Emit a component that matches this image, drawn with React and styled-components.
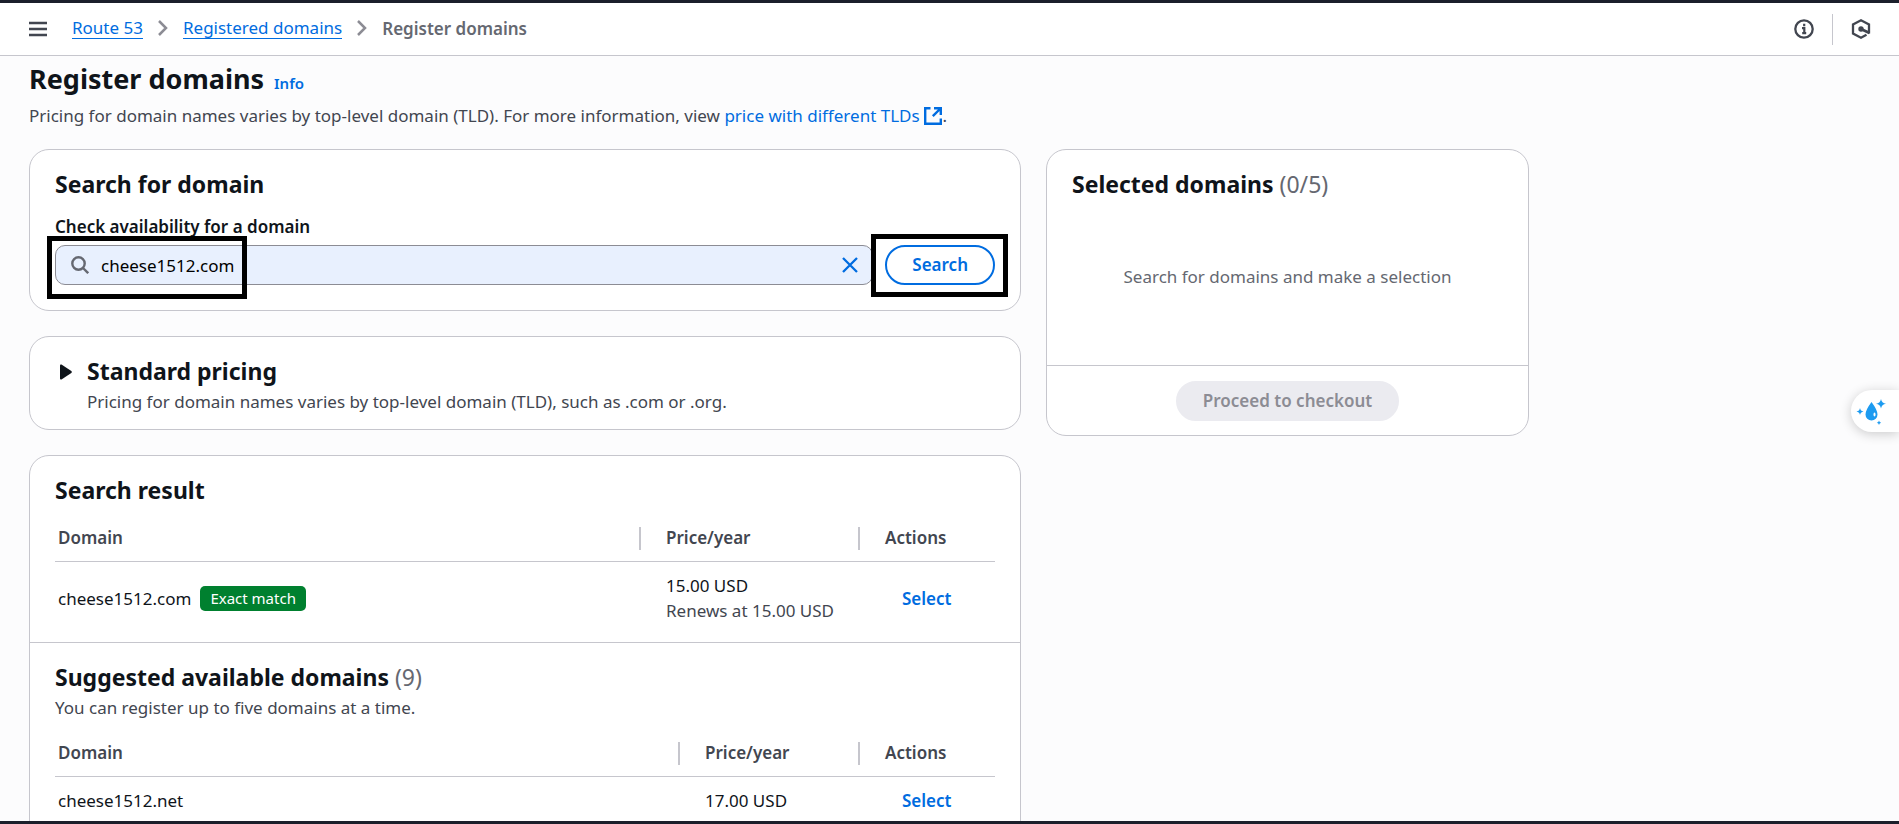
import React, { useState } from "react";
import styled, { createGlobalStyle } from "styled-components";

const GlobalStyle = createGlobalStyle`
  *, *::before, *::after { box-sizing: border-box; }
  body {
    margin: 0;
    background: #fcfcfd;
    color: #0f141a;
    font-family: "Noto Sans", "Open Sans", sans-serif;
    font-size: 17px;
    line-height: 25px;
  }
  button, input { font: inherit; }
  h1, h2, p { margin: 0; }
`;

const Frame = styled.div`
  display: flex;
  flex-direction: column;
  height: 100vh;
  border-top: 3px solid #1b1f2b;
  border-bottom: 3px solid #1b1f2b;
`;

const TopBar = styled.header`
  display: flex;
  align-items: center;
  flex: none;
  height: 53px;
  padding: 0 28px 0 29px;
  background: #fff;
  border-bottom: 1px solid #c6c6cd;
`;

const IconButton = styled.button`
  display: flex;
  padding: 0;
  border: 0;
  background: none;
  color: ${(p) => p.$color || "#424650"};
  cursor: pointer;
`;

const Crumbs = styled.ol`
  display: flex;
  align-items: center;
  gap: 15px;
  margin: 0 0 0 25px;
  padding: 0 0 2px;
  list-style: none;
`;

const Crumb = styled.li`
  display: flex;
  align-items: center;
  gap: 15px;
  font-weight: ${(p) => (p.$current ? 600 : 400)};
  color: #656871;
`;

const CrumbLink = styled.a`
  line-height: 21px;
  color: #006ce0;
  text-decoration: none;
  border-bottom: 1px solid #006ce0;
`;

const Tools = styled.div`
  display: flex;
  align-items: center;
  gap: 18px;
  margin-left: auto;
`;

const ToolDivider = styled.span`
  width: 1px;
  height: 31px;
  background: #c6c6cd;
`;

const Main = styled.main`
  flex: 1;
  min-height: 0;
  overflow-y: auto;
  scrollbar-width: none;
  padding: 5px 29px 0;
`;

const Content = styled.div`
  max-width: 1500px;
`;

const TitleRow = styled.div`
  display: flex;
  align-items: baseline;
  gap: 10px;
`;

const PageTitle = styled.h1`
  font-size: 27px;
  line-height: 36px;
  font-weight: 700;
`;

const TextLink = styled.a`
  color: #006ce0;
  text-decoration: none;
`;

const InfoLink = styled(TextLink)`
  font-size: 15px;
  font-weight: 600;
`;

const Description = styled.p`
  color: #424650;
  margin-top: ${(p) => p.$gap || 3}px;
`;

const InlineIcon = styled.svg`
  margin: 0 1px 0 4px;
  vertical-align: -3px;
`;

const Columns = styled.div`
  display: grid;
  grid-template-columns: minmax(0, 992fr) minmax(0, 483fr);
  gap: 25px;
  align-items: start;
  margin-top: 21px;
`;

const Stack = styled.div`
  display: flex;
  flex-direction: column;
  gap: 25px;
`;

const Card = styled.section`
  background: #fff;
  border: 1px solid #c6c6cd;
  border-radius: 20px;
`;

const CardBody = styled.div`
  padding: 19px 25px ${(p) => p.$bottom}px;
  border-top: ${(p) => (p.$ruled ? "1px solid #c6c6cd" : "0")};
`;

const CardTitle = styled.h2`
  font-size: 23px;
  line-height: 30px;
  font-weight: 700;
`;

const Counter = styled.span`
  font-weight: 400;
  color: #656871;
`;

const FieldLabel = styled.label`
  display: block;
  margin: 15px 0 6px;
  font-weight: 600;
`;

const SearchRow = styled.form`
  display: flex;
  gap: 12px;
`;

const Field = styled.div`
  position: relative;
  display: flex;
  align-items: center;
  flex: 1;
  height: 40px;
  padding: 0 14px 0 15px;
  gap: 12px;
  background: #e8f0fe;
  border: 1px solid #8c8c94;
  border-radius: 10px;
`;

const FieldInput = styled.input`
  flex: 1;
  min-width: 0;
  padding: 0;
  border: 0;
  outline: 0;
  background: transparent;
  color: #000;
`;

const ButtonSlot = styled.div`
  position: relative;
`;

const Marker = styled.span`
  position: absolute;
  border: 5px solid #000;
  pointer-events: none;
`;

const FieldMarker = styled(Marker)`
  top: -10px;
  left: -9px;
  width: 200px;
  height: 63px;
`;

const ButtonMarker = styled(Marker)`
  inset: -11px -13px -12px -14px;
`;

const PillButton = styled.button`
  height: 40px;
  padding: 0 25px 2px;
  border: 2px solid ${(p) => (p.disabled ? "#ebebf0" : "#006ce0")};
  border-radius: 20px;
  background: ${(p) => (p.disabled ? "#ebebf0" : "#fff")};
  color: ${(p) => (p.disabled ? "#8c8c94" : "#006ce0")};
  font-weight: 600;
  line-height: 25px;
`;

const Expander = styled.button`
  display: flex;
  align-items: flex-start;
  gap: 15px;
  width: 100%;
  padding: 19px 30px 15px;
  border: 0;
  background: none;
  color: inherit;
  text-align: left;
`;

const Caret = styled.svg`
  flex: none;
  margin-top: 8px;
`;

const Table = styled.table`
  width: 100%;
  margin-top: 10px;
  table-layout: fixed;
  border-collapse: separate;
  border-spacing: 0;
`;

const Col = styled.col`
  width: ${(p) => (p.$width ? `${p.$width}px` : "auto")};
`;

const HeadCell = styled.th`
  position: relative;
  padding: 10px 0 11px 27px;
  border-bottom: 1px solid #c6c6cd;
  color: #424650;
  font-weight: 600;
  text-align: left;

  &:first-child { padding-left: 3px; }

  &:not(:first-child)::before {
    content: "";
    position: absolute;
    left: 0;
    top: 12px;
    bottom: 11px;
    width: 2px;
    background: #c6c6cd;
  }
`;

const Cell = styled.td`
  padding: 11px 0 11px 27px;
  vertical-align: middle;
  white-space: nowrap;

  &:first-child { padding-left: 3px; }
`;

const Renewal = styled.div`
  color: #424650;
`;

const DomainName = styled.div`
  display: flex;
  align-items: center;
  gap: 9px;
`;

const Badge = styled.span`
  padding: 0 10px;
  border-radius: 5px;
  background: #00802f;
  color: #fff;
  font-size: 15px;
  line-height: 25px;
`;

const SelectButton = styled.button`
  display: block;
  padding: 0 17px;
  border: 0;
  background: none;
  color: #006ce0;
  font-weight: 600;
`;

const EmptyState = styled.p`
  padding: 65px 0 57px;
  color: #656871;
  text-align: center;
`;

const CardFooter = styled.div`
  display: flex;
  justify-content: center;
  padding: 15px 25px 14px;
  border-top: 1px solid #c6c6cd;
`;

const Assistant = styled.button`
  position: fixed;
  right: 0;
  top: 390px;
  width: 48px;
  height: 42px;
  padding: 0;
  border: 0;
  border-radius: 21px 0 0 21px;
  background: #fff;
  box-shadow: 0 2px 12px rgba(0, 0, 0, 0.2);
`;

const Chevron = () => (
  <svg width="10" height="16" viewBox="0 0 10 16" fill="none" stroke="#8c8c94" strokeWidth="2.500" aria-hidden="true">
    <path d="M1 1l7 7-7 7" />
  </svg>
);

function DomainTable({ rows, priceWidth }) {
  return (
    <Table>
      <colgroup>
        <Col />
        <Col $width={priceWidth} />
        <Col $width={137} />
      </colgroup>
      <thead>
        <tr>
          <HeadCell scope="col">Domain</HeadCell>
          <HeadCell scope="col">Price/year</HeadCell>
          <HeadCell scope="col">Actions</HeadCell>
        </tr>
      </thead>
      <tbody>
        {rows.map((row) => (
          <tr key={row.name}>
            <Cell>
              <DomainName>
                {row.name}
                {row.badge && <Badge>{row.badge}</Badge>}
              </DomainName>
            </Cell>
            <Cell>
              {row.price}
              {row.renewal && <Renewal>{row.renewal}</Renewal>}
            </Cell>
            <Cell>
              <SelectButton type="button">Select</SelectButton>
            </Cell>
          </tr>
        ))}
      </tbody>
    </Table>
  );
}

const matches = [
  { name: "cheese1512.com", badge: "Exact match", price: "15.00 USD", renewal: "Renews at 15.00 USD" },
];
const suggestions = [{ name: "cheese1512.net", price: "17.00 USD" }];

export default function App() {
  const [query, setQuery] = useState("cheese1512.com");

  return (
    <Frame>
      <GlobalStyle />
      <TopBar>
        <IconButton type="button" aria-label="Open navigation">
          <svg width="18" height="16" viewBox="0 0 18 16" stroke="currentColor" strokeWidth="2.300">
            <path d="M0 2h18M0 8h18M0 14h18" />
          </svg>
        </IconButton>
        <nav aria-label="Breadcrumbs">
          <Crumbs>
            <Crumb>
              <CrumbLink href="#route53">Route 53</CrumbLink>
              <Chevron />
            </Crumb>
            <Crumb>
              <CrumbLink href="#registered">Registered domains</CrumbLink>
              <Chevron />
            </Crumb>
            <Crumb $current>Register domains</Crumb>
          </Crumbs>
        </nav>
        <Tools>
          <IconButton type="button" aria-label="Information">
            <svg width="20" height="20" viewBox="0 0 20 20" fill="none" stroke="currentColor" strokeWidth="2.300">
              <circle cx="10" cy="10" r="8.700" />
              <path d="M10.200 4.800v2.400M8 9.200h2.300v5.200M8.200 14.200h4" strokeWidth="2.200" />
            </svg>
          </IconButton>
          <ToolDivider />
          <IconButton type="button" aria-label="Amazon Q">
            <svg width="20" height="20" viewBox="0 0 20 20" fill="none" stroke="currentColor" strokeWidth="2.300">
              <path d="M18 14.500V5.500L10 1.300 2 5.500v9l8 4.200 5.500-3" />
              <circle cx="10" cy="10" r="2.700" fill="currentColor" stroke="none" />
              <path d="M10 10l8.500 4" strokeWidth="2.800" />
            </svg>
          </IconButton>
        </Tools>
      </TopBar>

      <Main>
        <Content>
          <TitleRow>
            <PageTitle>Register domains</PageTitle>
            <InfoLink href="#info">Info</InfoLink>
          </TitleRow>
          <Description $gap={6}>
            Pricing for domain names varies by top-level domain (TLD). For more information, view{" "}
            <TextLink href="#pricing">
              price with different TLDs
              <InlineIcon width="18" height="18" viewBox="0 0 18 18" fill="none" stroke="currentColor" strokeWidth="2.400" aria-hidden="true">
                <path d="M6.500 1.200H1.200v15.600h15.600V11.500" />
                <path d="M10 1.200h6.800V8M16.500 1.500L8.800 9.200" />
              </InlineIcon>
            </TextLink>
            .
          </Description>

          <Columns>
            <Stack>
              <Card>
                <CardBody $bottom={25}>
                  <CardTitle>Search for domain</CardTitle>
                  <FieldLabel htmlFor="domain">Check availability for a domain</FieldLabel>
                  <SearchRow onSubmit={(e) => e.preventDefault()}>
                    <Field>
                      <svg width="18" height="18" viewBox="0 0 18 18" fill="none" stroke="#656871" strokeWidth="2.400" aria-hidden="true">
                        <circle cx="7.500" cy="7.500" r="6.200" />
                        <path d="M12 12l5.200 5.200" />
                      </svg>
                      <FieldInput id="domain" type="text" value={query} onChange={(e) => setQuery(e.target.value)} />
                      <IconButton type="button" $color="#006ce0" aria-label="Clear" onClick={() => setQuery("")}>
                        <svg width="16" height="16" viewBox="0 0 16 16" stroke="currentColor" strokeWidth="2.300">
                          <path d="M1 1l14 14M15 1L1 15" />
                        </svg>
                      </IconButton>
                      <FieldMarker />
                    </Field>
                    <ButtonSlot>
                      <PillButton type="submit">Search</PillButton>
                      <ButtonMarker />
                    </ButtonSlot>
                  </SearchRow>
                </CardBody>
              </Card>

              <Card>
                <Expander type="button" aria-expanded="false">
                  <Caret width="12" height="16" viewBox="0 0 12 16" fill="#0f141a" aria-hidden="true">
                    <path d="M0 1.500Q0 0 1.500.6L11.300 7q1 1 0 2L1.500 15.400Q0 16 0 14.500z" />
                  </Caret>
                  <div>
                    <CardTitle as="div">Standard pricing</CardTitle>
                    <Description as="div">
                      Pricing for domain names varies by top-level domain (TLD), such as .com or .org.
                    </Description>
                  </div>
                </Expander>
              </Card>

              <Card>
                <CardBody $bottom={8}>
                  <CardTitle>Search result</CardTitle>
                  <DomainTable rows={matches} priceWidth={219} />
                </CardBody>
                <CardBody $ruled $bottom={25}>
                  <CardTitle>
                    Suggested available domains <Counter>(9)</Counter>
                  </CardTitle>
                  <Description>You can register up to five domains at a time.</Description>
                  <DomainTable rows={suggestions} priceWidth={180} />
                </CardBody>
              </Card>
            </Stack>

            <Card>
              <CardBody $bottom={19}>
                <CardTitle>
                  Selected domains <Counter>(0/5)</Counter>
                </CardTitle>
                <EmptyState>Search for domains and make a selection</EmptyState>
              </CardBody>
              <CardFooter>
                <PillButton type="button" disabled>
                  Proceed to checkout
                </PillButton>
              </CardFooter>
            </Card>
          </Columns>
        </Content>
      </Main>

      <Assistant type="button" aria-label="Assistant">
        <svg width="48" height="42" viewBox="0 0 48 42" fill="#1d9bf0">
          <path d="M20.500 12q-6 8-6 12.500a6 6 0 0 0 12 0Q26.500 20 20.500 12z" />
          <ellipse cx="23.500" cy="24.500" rx="1" ry="2" fill="#fff" />
          <path d="M30 9q.6 4 5 4.800-4.400.6-5 4.800-.6-4.200-5-4.800 4.400-.8 5-4.800z" />
          <path d="M9 18q.4 3 3.500 3.500Q9.400 22 9 25q-.4-3-3.500-3.500Q8.600 21 9 18z" />
          <path d="M28 30.500q.3 2 2.200 2.300-1.900.3-2.200 2.300-.3-2-2.200-2.300 1.900-.3 2.200-2.300z" />
        </svg>
      </Assistant>
    </Frame>
  );
}
